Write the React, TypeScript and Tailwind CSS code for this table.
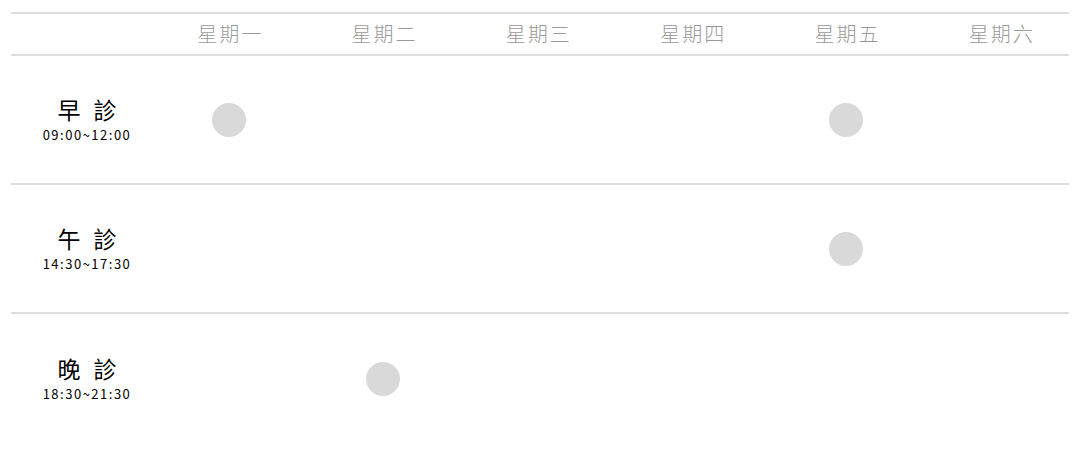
const days = ["星期一", "星期二", "星期三", "星期四", "星期五", "星期六"];

const sessions = [
  { name: "早 診", time: "09:00~12:00", open: [0, 4] },
  { name: "午 診", time: "14:30~17:30", open: [4] },
  { name: "晚 診", time: "18:30~21:30", open: [1] },
];

const font = { fontFamily: '"Noto Sans CJK TC", "Noto Sans", sans-serif' };

export default function App() {
  return (
    <div className="w-[1080px] h-[450px] bg-white pt-3 px-[11px]" style={font}>
      <div className="border-t-2 border-[#dddddd]">
        <div className="grid grid-cols-[132px_repeat(6,1fr)] h-[42px] border-b-2 border-[#dddddd] items-center">
          <div />
          {days.map((d) => (
            <div key={d} className="pl-5 text-center text-[20px] font-light text-[#999999] tracking-[2px] leading-none">
              {d}
            </div>
          ))}
        </div>
        {sessions.map((s, i) => (
          <div
            key={s.name}
            className={
              "grid grid-cols-[132px_repeat(6,1fr)] h-[129px] items-center " +
              (i < sessions.length - 1 ? "border-b-2 border-[#dddddd]" : "")
            }
          >
            <div className="pl-5 flex flex-col items-center text-black">
              <div className="text-[23px] leading-[26px] whitespace-pre tracking-[4px] pl-[4px]">{s.name}</div>
              <div className="text-[13px] leading-[18px] tracking-[1.5px] mt-[4px]">{s.time}</div>
            </div>
            {days.map((d, j) => (
              <div key={d} className="pl-5 flex justify-center">
                {s.open.includes(j) && <div className="w-[34px] h-[34px] rounded-full bg-[#d9d9d9] -translate-x-px" />}
              </div>
            ))}
          </div>
        ))}
      </div>
    </div>
  );
}
